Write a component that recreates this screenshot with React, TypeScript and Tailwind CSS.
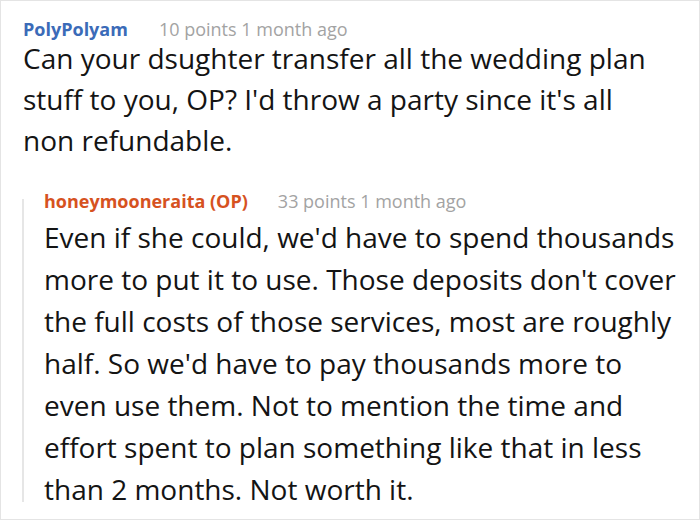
export default function App() {
    return (
        <div className="w-[700px] h-[520px] bg-white border border-[#e4e4e4] overflow-hidden font-['Open_Sans',sans-serif] text-[#141414]">
            <div className="pl-[22px] pr-2 pt-[18px]">
                <div className="flex items-baseline text-[18px] leading-[20px]">
                    <span className="font-bold text-[#3b6bb8]">PolyPolyam</span>
                    <span className="ml-[31px] text-[#a3a3a3]">10 points 1 month ago</span>
                </div>
                <p className="text-[28px] leading-[41px] -mt-[1px]">
                    Can your dsughter transfer all the wedding plan<br />
                    stuff to you, OP? I'd throw a party since it's all<br />
                    non refundable.
                </p>
            </div>
            <div className="flex ml-[21px] mt-[30px]">
                <div className="w-[2px] shrink-0 bg-[#e6e6e6] mt-[8px] mb-[8px]"></div>
                <div className="pl-[20px]">
                    <div className="flex items-baseline text-[18px] leading-[20px]">
                        <span className="font-bold text-[#d6521f]">honeymooneraita (OP)</span>
                        <span className="ml-[30px] text-[#a3a3a3]">33 points 1 month ago</span>
                    </div>
                    <p className="text-[28px] leading-[42px] mt-[5px]">
                        Even if she could, we'd have to spend thousands<br />
                        more to put it to use. Those deposits don't cover<br />
                        the full costs of those services, most are roughly<br />
                        half. So we'd have to pay thousands more to<br />
                        even use them. Not to mention the time and<br />
                        effort spent to plan something like that in less<br />
                        than 2 months. Not worth it.
                    </p>
                </div>
            </div>
        </div>
    )
}
